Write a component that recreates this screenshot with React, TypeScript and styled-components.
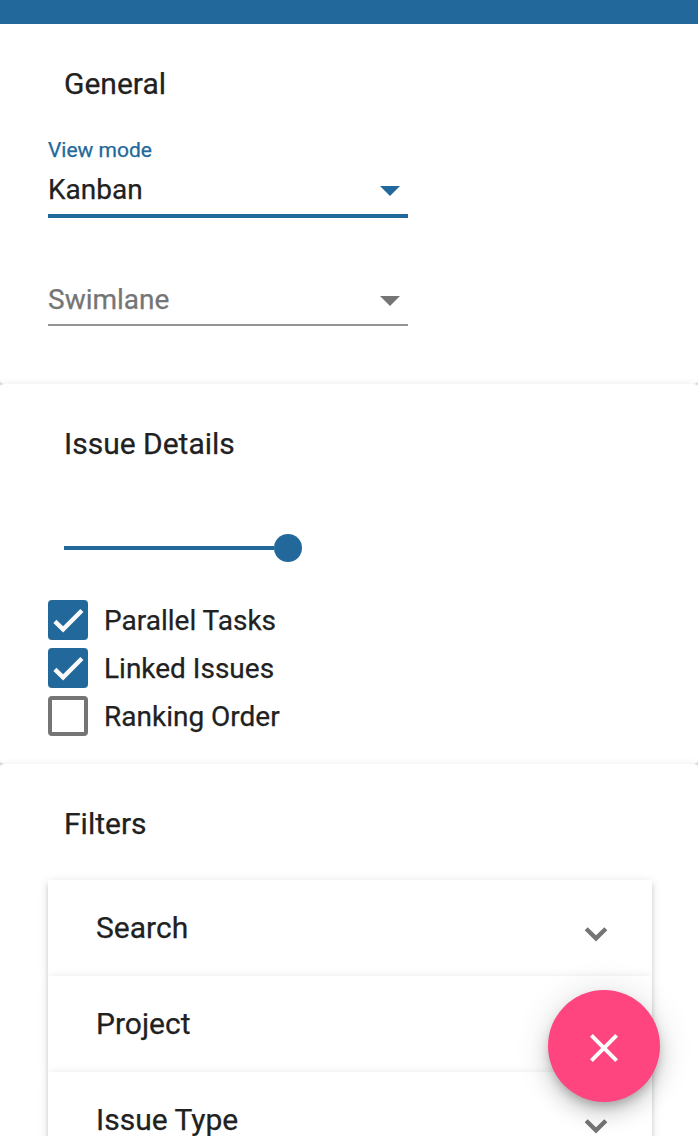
import React from "react";
import styled, { createGlobalStyle } from "styled-components";

const blue = "#22689b";

const Global = createGlobalStyle`
  * { box-sizing: border-box; }
  html, body { margin: 0; padding: 0; }
  body { font-family: Roboto, "Liberation Sans", sans-serif; color: #212121; background: #fff; -webkit-text-stroke: 0.25px currentColor; }
`;
const Page = styled.main`
  width: 698px; height: 1136px; overflow: hidden; background: #fff; position: relative;
`;
const TopBar = styled.header`height: 24px; background: ${blue}; position: relative; z-index: 1;`;
const Panel = styled.section<{ $h: number }>`
  height: ${p => p.$h}px; padding: 0 46px 0 48px; background: #fff;
  border-radius: 4px; display: flow-root;
  box-shadow: 0 4px 2px -2px rgba(0,0,0,.2), 0 2px 2px rgba(0,0,0,.14), 0 2px 10px rgba(0,0,0,.12);
  &:first-of-type { border-top-left-radius: 0; border-top-right-radius: 0; }
`;
const Title = styled.h2`
  margin: 40px 0 0 16px; height: 40px; font-size: 30px; line-height: 40px; font-weight: 400;
`;
const Field = styled.div<{ $top: number; $active?: boolean }>`
  margin-top: ${p => p.$top}px; width: 360px; height: 50px;
  display: flex; align-items: center; justify-content: space-between;
  padding: 0 8px 2px 0; font-size: 28px;
  color: ${p => (p.$active ? "#212121" : "#757575")};
  border-bottom: ${p => (p.$active ? `4px solid ${blue}` : "2px solid #949494")};
`;
const FieldText = styled.span<{ $active?: boolean }>`
  margin-bottom: ${p => (p.$active ? 2 : 0)}px;
`;
const FieldLabel = styled.div`
  margin-top: 32px; height: 28px; line-height: 28px; font-size: 21px; color: ${blue};
`;
const Arrow = styled.span<{ $active?: boolean }>`
  margin-top: ${p => (p.$active ? 2 : 4)}px;
  border: 10px solid transparent; border-bottom: 0;
  border-top-color: ${p => (p.$active ? blue : "#757575")};
`;
const Slider = styled.div`
  margin: 70px 0 0 16px; height: 28px; width: 238px; display: flex; align-items: center;
`;
const Track = styled.span`height: 4px; flex: 1; background: ${blue};`;
const Thumb = styled.span`width: 28px; height: 28px; border-radius: 50%; background: ${blue};`;
const Checks = styled.div`margin-top: 38px; display: flex; flex-direction: column; gap: 8px;`;
const Check = styled.label`display: flex; align-items: center; gap: 16px; height: 40px; font-size: 28px;`;
const Box = styled.span<{ $on: boolean }>`
  width: 40px; height: 40px; border-radius: 4px; display: block;
  background: ${p => (p.$on ? blue : "#fff")};
  border: ${p => (p.$on ? "0" : "4px solid #757575")};
`;
const CheckMark = styled.svg`display: block;`;
const Accordion = styled.div`margin-top: 36px;`;
const AccordionRow = styled.div`
  height: 96px; display: flex; align-items: center; justify-content: space-between;
  padding: 0 44px 0 48px; font-size: 30px; background: #fff;
  box-shadow: 0 6px 2px -4px rgba(0,0,0,.2), 0 4px 4px rgba(0,0,0,.14), 0 2px 10px rgba(0,0,0,.12);
`;
const RowText = styled.span`margin-bottom: 2px;`;
const Chevron = styled.svg`display: block; margin-top: 12px;`;
const Fab = styled.button`
  position: absolute; left: 548px; top: 990px; width: 112px; height: 112px; border: 0; padding: 4px 0 0;
  border-radius: 50%; background: #ff457f; display: grid; place-items: center;
  box-shadow: 0 6px 10px -2px rgba(0,0,0,.2), 0 12px 20px rgba(0,0,0,.14), 0 2px 36px rgba(0,0,0,.12);
`;

function CheckItem({ label, on = false }: { label: string; on?: boolean }) {
  return (
    <Check>
      <Box $on={on}>
        {on && (
          <CheckMark width="40" height="40" viewBox="0 0 40 40">
            <path d="M6.9 21.4 15.1 29.4 33.9 10.5" fill="none" stroke="#fafafa" strokeWidth="4.4" />
          </CheckMark>
        )}
      </Box>
      {label}
    </Check>
  );
}

export default function App() {
  return (
    <>
      <Global />
      <Page>
        <TopBar />
        <Panel $h={360}>
          <Title>General</Title>
          <FieldLabel>View mode</FieldLabel>
          <Field $top={4} $active><FieldText $active>Kanban</FieldText><Arrow $active /></Field>
          <Field $top={58}><FieldText>Swimlane</FieldText><Arrow /></Field>
        </Panel>
        <Panel $h={380}>
          <Title>Issue Details</Title>
          <Slider><Track /><Thumb /></Slider>
          <Checks>
            <CheckItem label="Parallel Tasks" on />
            <CheckItem label="Linked Issues" on />
            <CheckItem label="Ranking Order" />
          </Checks>
        </Panel>
        <Panel $h={480}>
          <Title>Filters</Title>
          <Accordion>
            {["Search", "Project", "Issue Type"].map(t => (
              <AccordionRow key={t}>
                <RowText>{t}</RowText>
                <Chevron width="24" height="16" viewBox="0 0 24 16">
                  <path d="m2.2 2.8 9.8 9.6 9.8-9.6" fill="none" stroke="#757575" strokeWidth="4.3" />
                </Chevron>
              </AccordionRow>
            ))}
          </Accordion>
        </Panel>
        <Fab aria-label="Close">
          <svg width="48" height="48" viewBox="0 0 24 24">
            <path fill="#fff" d="M19 6.41 17.59 5 12 10.59 6.41 5 5 6.41 10.59 12 5 17.59 6.41 19 12 13.41 17.59 19 19 17.59 13.41 12z" />
          </svg>
        </Fab>
      </Page>
    </>
  );
}
